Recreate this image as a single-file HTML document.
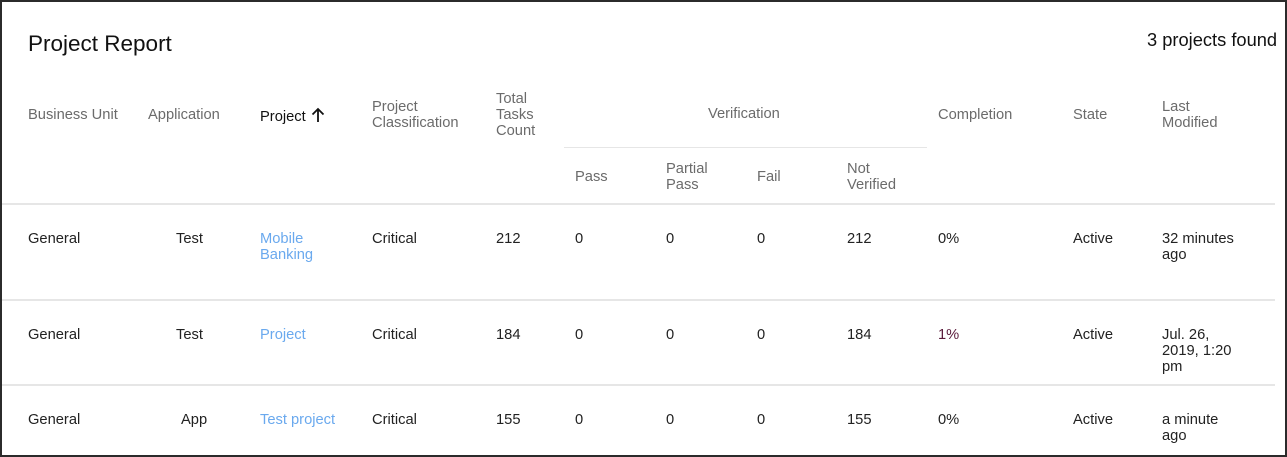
<!DOCTYPE html>
<html><head><style>
body{margin:0;width:1287px;height:457px;overflow:hidden;background:#fff;font-family:"Liberation Sans",sans-serif;}
.f{position:absolute;left:0;top:0;width:1283px;height:453px;border:2px solid #2b2b2b;}
.t{position:absolute;font-size:14.7px;line-height:16px;color:#222;white-space:nowrap;}
.h{color:#6b6b6b;}
.l{color:#6aa9ee;}
.ln{position:absolute;height:2px;background:#e6e6e6;}
</style></head><body>
<div class="f"></div>
<div class="t" style="left:28px;top:32px;font-size:22.5px;line-height:24px;color:#111">Project Report</div>
<div class="t" style="left:1147px;top:30px;font-size:18.3px;line-height:20px;color:#111">3 projects found</div>

<div class="t h" style="left:28px;top:107px">Business Unit</div>
<div class="t h" style="left:148px;top:107px">Application</div>
<div class="t" style="left:260px;top:107px;color:#111">Project <svg width="16" height="16" viewBox="0 0 16 16" style="vertical-align:-2px"><path d="M8 15V2M2.5 7.5L8 2l5.5 5.5" stroke="#111" stroke-width="1.8" fill="none"/></svg></div>
<div class="t h" style="left:372px;top:99px">Project<br>Classification</div>
<div class="t h" style="left:496px;top:91px">Total<br>Tasks<br>Count</div>
<div class="t h" style="left:708px;top:106px">Verification</div>
<div class="ln" style="left:564px;top:147px;width:363px;height:1px"></div>
<div class="t h" style="left:575px;top:169px">Pass</div>
<div class="t h" style="left:666px;top:161px">Partial<br>Pass</div>
<div class="t h" style="left:757px;top:169px">Fail</div>
<div class="t h" style="left:847px;top:161px">Not<br>Verified</div>
<div class="t h" style="left:938px;top:107px">Completion</div>
<div class="t h" style="left:1073px;top:107px">State</div>
<div class="t h" style="left:1162px;top:99px">Last<br>Modified</div>

<div class="ln" style="left:2px;top:203px;width:1273px"></div>
<div class="ln" style="left:2px;top:299px;width:1273px"></div>
<div class="ln" style="left:2px;top:384px;width:1273px"></div>

<div class="t" style="left:28px;top:231px">General</div>
<div class="t" style="left:176px;top:231px">Test</div>
<div class="t l" style="left:260px;top:231px">Mobile<br>Banking</div>
<div class="t" style="left:372px;top:231px">Critical</div>
<div class="t" style="left:496px;top:231px">212</div>
<div class="t" style="left:575px;top:231px">0</div>
<div class="t" style="left:666px;top:231px">0</div>
<div class="t" style="left:757px;top:231px">0</div>
<div class="t" style="left:847px;top:231px">212</div>
<div class="t" style="left:938px;top:231px">0%</div>
<div class="t" style="left:1073px;top:231px">Active</div>
<div class="t" style="left:1162px;top:231px">32 minutes<br>ago</div>

<div class="t" style="left:28px;top:327px">General</div>
<div class="t" style="left:176px;top:327px">Test</div>
<div class="t l" style="left:260px;top:327px">Project</div>
<div class="t" style="left:372px;top:327px">Critical</div>
<div class="t" style="left:496px;top:327px">184</div>
<div class="t" style="left:575px;top:327px">0</div>
<div class="t" style="left:666px;top:327px">0</div>
<div class="t" style="left:757px;top:327px">0</div>
<div class="t" style="left:847px;top:327px">184</div>
<div class="t" style="left:938px;top:327px;color:#5a1a3a">1%</div>
<div class="t" style="left:1073px;top:327px">Active</div>
<div class="t" style="left:1162px;top:327px">Jul. 26,<br>2019, 1:20<br>pm</div>

<div class="t" style="left:28px;top:412px">General</div>
<div class="t" style="left:181px;top:412px">App</div>
<div class="t l" style="left:260px;top:412px">Test project</div>
<div class="t" style="left:372px;top:412px">Critical</div>
<div class="t" style="left:496px;top:412px">155</div>
<div class="t" style="left:575px;top:412px">0</div>
<div class="t" style="left:666px;top:412px">0</div>
<div class="t" style="left:757px;top:412px">0</div>
<div class="t" style="left:847px;top:412px">155</div>
<div class="t" style="left:938px;top:412px">0%</div>
<div class="t" style="left:1073px;top:412px">Active</div>
<div class="t" style="left:1162px;top:412px">a minute<br>ago</div>
</body></html>
